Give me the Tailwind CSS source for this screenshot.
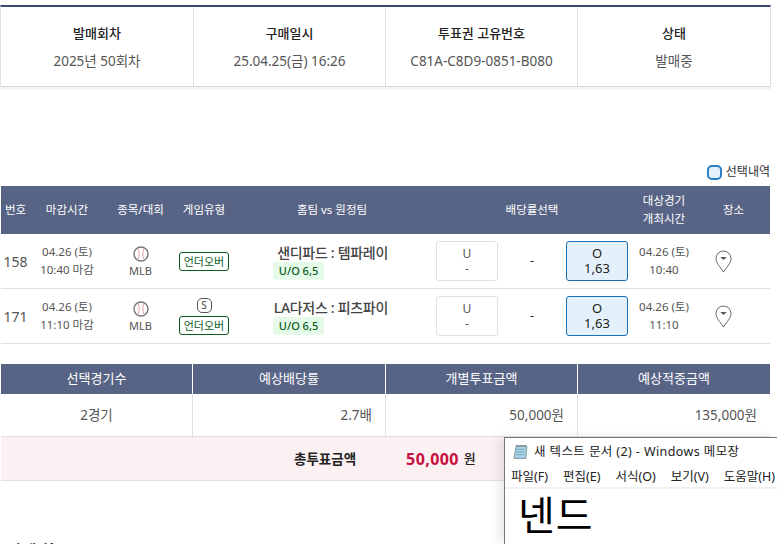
<!DOCTYPE html>
<html lang="ko">
  <head>
    <meta charset="UTF-8" />
    <title>투표권 상세</title>
    <script src="https://cdn.jsdelivr.net/npm/@tailwindcss/browser@4"></script>
  </head>
  <body class="relative h-[544px] w-[777px] overflow-hidden bg-white font-['Noto_Sans','Noto_Sans_CJK_KR',sans-serif] text-[13px] text-[#555]">
    <!-- 상단 정보 -->
    <div class="pt-[5px]">
      <div class="grid h-[82px] w-[771px] grid-cols-[193px_192px_192px_192px] border-x border-b border-t-2 border-x-[#e0e0e0] border-b-[#d8d8d8] border-t-[#3a4a6b] shadow-[0_3px_0_#f5f5f5]">
        <div class="flex flex-col items-center justify-center gap-[10px] border-r border-[#e0e0e0]">
          <b class="text-[13px] font-medium leading-[18px] text-[#222]">발매회차</b><span class="text-[13.5px] leading-[18px]">2025년 50회차</span>
        </div>
        <div class="flex flex-col items-center justify-center gap-[10px] border-r border-[#e0e0e0]">
          <b class="text-[13px] font-medium leading-[18px] text-[#222]">구매일시</b><span class="text-[13.5px] leading-[18px]">25.04.25(금) 16:26</span>
        </div>
        <div class="flex flex-col items-center justify-center gap-[10px] border-r border-[#e0e0e0]">
          <b class="text-[13px] font-medium leading-[18px] text-[#222]">투표권 고유번호</b><span class="text-[13.5px] leading-[18px]">C81A-C8D9-0851-B080</span>
        </div>
        <div class="flex flex-col items-center justify-center gap-[10px]">
          <b class="text-[13px] font-medium leading-[18px] text-[#222]">상태</b><span class="text-[13.5px] leading-[18px]">발매중</span>
        </div>
      </div>
    </div>

    <!-- 선택내역 -->
    <div class="mb-[3px] mt-[74px] flex h-[22px] w-[770px] items-center justify-end gap-1 text-[12px] text-[#333]">
      <span class="h-[15px] w-[15px] rounded-[5px] border-2 border-[#2a7fc4] bg-[#e4f1fb]"></span>
      <span>선택내역</span>
    </div>

    <!-- 경기 목록 -->
    <div class="ml-px w-[769px]">
      <div class="grid h-[48px] grid-cols-[29px_74px_73px_54px_202px_198px_66px_73px] items-center bg-[#586485] text-center text-[11.5px] leading-[18px] text-white">
        <span>번호</span><span>마감시간</span><span>종목/대회</span><span>게임유형</span><span>홈팀 vs 원정팀</span><span>배당률선택</span><span>대상경기<br />개최시간</span><span>장소</span>
      </div>

      <div class="grid h-[55px] grid-cols-[29px_74px_73px_54px_202px_198px_66px_73px] items-center border-b border-[#e0e0e0] text-center">
        <span class="text-[14px]">158</span>
        <div class="text-[11.5px] leading-[18px]">04.26 (토)<br />10:40 마감</div>
        <div class="flex flex-col items-center text-[11px] leading-[14px]">
          <svg class="mt-px h-[16px] w-[16px]" viewBox="0 0 16 16" fill="none"><circle cx="8" cy="8" r="7" stroke="#777" stroke-width="1.4" /><path d="M5 2.500c1.600 3.400 1.600 7.600 0 11M11 2.500c-1.600 3.400-1.600 7.600 0 11" stroke="#e0a0a0" /></svg>
          <span class="mt-[2px]">MLB</span>
        </div>
        <div class="flex flex-col items-center">
          <span class="h-[19px] w-[50px] rounded-[3px] border border-[#0b5c1e] text-[11px] leading-[17px] text-[#0b5c1e]">언더오버</span>
        </div>
        <div class="pl-[42px]">
          <div class="mt-[2px] w-[115px] whitespace-nowrap text-right text-[14px] font-medium leading-[18px] tracking-[-0.3px] text-[#444]">샌디파드 : 템파레이</div>
          <div class="h-[18px] w-[51px] rounded-[3px] bg-[#e6fae9] text-center text-[11px] font-medium leading-[18px] text-[#0b5c1e]">U/O 6,5</div>
        </div>
        <div class="flex items-center pl-[3px]">
          <div class="h-[40px] w-[62px] rounded-[3px] border border-[#e0e0e0] text-[12px] leading-[15px]"><div class="pt-[4px]">U</div><div>-</div></div>
          <span class="w-[68px] text-[#222]">-</span>
          <div class="h-[40px] w-[62px] rounded-[3px] border border-[#1a6fb5] bg-[#e4f1fb] text-[13px] leading-[15px] text-[#222]"><div class="pt-[4px]">O</div><div>1,63</div></div>
        </div>
        <div class="text-[11.5px] leading-[18px]">04.26 (토)<br />10:40</div>
        <div class="flex justify-start pl-[18px]">
          <svg class="h-[23px] w-[17px]" viewBox="0 0 17 23" fill="none"><path d="M8.500 22C5 16.500 1 13 1 8.500a7.500 7.500 0 0 1 15 0C16 13 12 16.500 8.500 22Z" stroke="#666" /><path d="M5.300 7h6.400L8.500 10Z" fill="#555" /></svg>
        </div>
      </div>

      <div class="grid h-[55px] grid-cols-[29px_74px_73px_54px_202px_198px_66px_73px] items-center border-b border-[#e0e0e0] text-center">
        <span class="text-[14px]">171</span>
        <div class="text-[11.5px] leading-[18px]">04.26 (토)<br />11:10 마감</div>
        <div class="flex flex-col items-center text-[11px] leading-[14px]">
          <svg class="mt-px h-[16px] w-[16px]" viewBox="0 0 16 16" fill="none"><circle cx="8" cy="8" r="7" stroke="#777" stroke-width="1.4" /><path d="M5 2.500c1.600 3.400 1.600 7.600 0 11M11 2.500c-1.600 3.400-1.600 7.600 0 11" stroke="#e0a0a0" /></svg>
          <span class="mt-[2px]">MLB</span>
        </div>
        <div class="flex flex-col items-center gap-[3px]">
          <span class="h-[15px] w-[15px] rounded-[5px] border border-[#555] text-[10px] leading-[13px] text-[#444]">S</span>
          <span class="h-[19px] w-[50px] rounded-[3px] border border-[#0b5c1e] text-[11px] leading-[17px] text-[#0b5c1e]">언더오버</span>
        </div>
        <div class="pl-[42px]">
          <div class="mt-[2px] w-[115px] whitespace-nowrap text-right text-[14px] font-medium leading-[18px] tracking-[-0.3px] text-[#444]">LA다저스 : 피츠파이</div>
          <div class="h-[18px] w-[51px] rounded-[3px] bg-[#e6fae9] text-center text-[11px] font-medium leading-[18px] text-[#0b5c1e]">U/O 6,5</div>
        </div>
        <div class="flex items-center pl-[3px]">
          <div class="h-[40px] w-[62px] rounded-[3px] border border-[#e0e0e0] text-[12px] leading-[15px]"><div class="pt-[4px]">U</div><div>-</div></div>
          <span class="w-[68px] text-[#222]">-</span>
          <div class="h-[40px] w-[62px] rounded-[3px] border border-[#1a6fb5] bg-[#e4f1fb] text-[13px] leading-[15px] text-[#222]"><div class="pt-[4px]">O</div><div>1,63</div></div>
        </div>
        <div class="text-[11.5px] leading-[18px]">04.26 (토)<br />11:10</div>
        <div class="flex justify-start pl-[18px]">
          <svg class="h-[23px] w-[17px]" viewBox="0 0 17 23" fill="none"><path d="M8.500 22C5 16.500 1 13 1 8.500a7.500 7.500 0 0 1 15 0C16 13 12 16.500 8.500 22Z" stroke="#666" /><path d="M5.300 7h6.400L8.500 10Z" fill="#555" /></svg>
        </div>
      </div>
    </div>

    <!-- 합계 -->
    <div class="ml-px mt-[20px] w-[769px]">
      <div class="grid h-[30px] grid-cols-[192px_193px_192px_192px] items-center bg-[#586485] text-center text-[13px] text-white">
        <span class="flex h-full items-center justify-center border-r border-white">선택경기수</span>
        <span class="flex h-full items-center justify-center border-r border-white">예상배당률</span>
        <span class="flex h-full items-center justify-center border-r border-white">개별투표금액</span>
        <span class="flex h-full items-center justify-center">예상적중금액</span>
      </div>
      <div class="grid h-[43px] grid-cols-[192px_193px_192px_192px] items-center border-b border-[#e0e0e0] text-[13.5px]">
        <span class="flex h-full items-center justify-center border-r border-[#e0e0e0]">2경기</span>
        <span class="flex h-full items-center justify-end border-r border-[#e0e0e0] pr-[13px]">2.7배</span>
        <span class="flex h-full items-center justify-end border-r border-[#e0e0e0] pr-[13px]">50,000원</span>
        <span class="flex h-full items-center justify-end pr-[13px]">135,000원</span>
      </div>
      <div class="flex h-[44px] items-center border-b border-[#e0e0e0] bg-[#fbf1f3] pt-px">
        <b class="ml-[293px] text-[13.5px] font-bold text-[#222]">총투표금액</b>
        <b class="ml-[50px] text-[16px] font-bold tracking-[0.4px] text-[#c8103f]">50,000</b>
        <b class="ml-[5px] text-[13px] font-medium text-[#222]">원</b>
      </div>
    </div>

    <h2 class="ml-[7px] mt-[60px] text-[16px] font-bold leading-[20px] text-[#222]">상세 항목 ·</h2>

    <!-- 메모장 창 -->
    <div class="absolute left-[504px] top-[437px] h-[107px] w-[273px] border-l border-t border-[#777] bg-white text-[#222] shadow-[-6px_0_10px_rgba(0,0,0,0.08)]">
      <div class="flex h-[27px] items-center gap-[5px] pl-[8px] pt-px">
        <svg class="h-[16px] w-[16px]" viewBox="0 0 15 15"><path d="M3 2h10l-1 11.500H1Z" fill="#a9d2e3" stroke="#6f8794" stroke-width="0.8" /><path d="M3 1.500h10" stroke="#555" stroke-dasharray="1 1" /><path d="M3.500 5h7.500M3.200 7.500h7.500M3 10h7.500" stroke="#6da3ba" stroke-width="0.7" /></svg>
        <span class="whitespace-nowrap text-[12.5px] tracking-[0.4px]">새 텍스트 문서 (2) - Windows 메모장</span>
      </div>
      <div class="flex h-[22px] items-center gap-[15px] whitespace-nowrap pl-[6px] pt-[2px] text-[12.5px]">
        <span>파일(F)</span><span>편집(E)</span><span>서식(O)</span><span>보기(V)</span><span>도움말(H)</span>
      </div>
      <div class="h-[2px] bg-[#f0f0f0]"></div>
      <div class="pl-[13px] pt-[2px] text-[40px] leading-[48px] tracking-[1px] text-black">넨드</div>
    </div>
  </body>
</html>
